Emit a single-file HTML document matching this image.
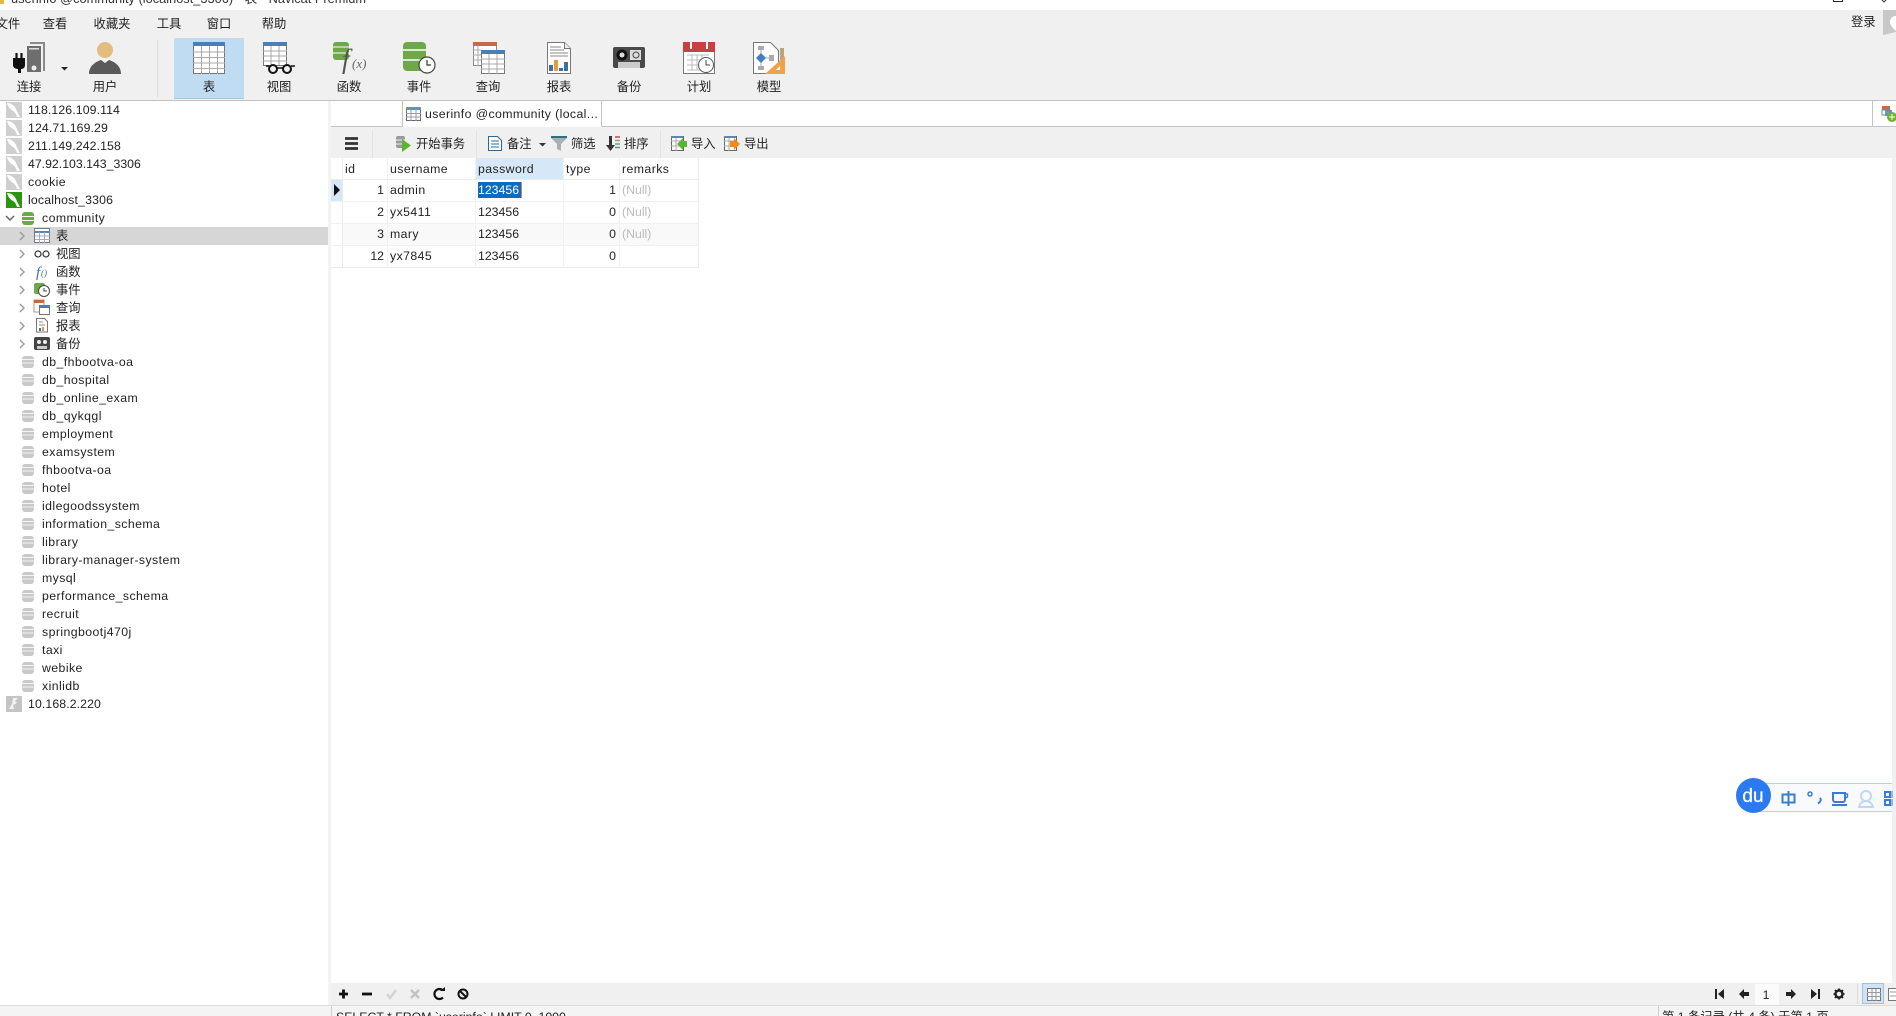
<!DOCTYPE html>
<html lang="zh"><head><meta charset="utf-8"><title>userinfo @community (localhost_3306) - 表 - Navicat Premium</title>
<style>
html,body{margin:0;padding:0;width:1896px;height:1016px;overflow:hidden;background:#fff}
body{position:relative;font-family:"Liberation Sans","Noto Sans CJK SC",sans-serif;font-size:12.3px;color:#222}
.a{position:absolute}
.t{position:absolute;white-space:nowrap;line-height:18px;height:18px}
.c{transform:translateX(-50%)}
.r{transform:translateX(-100%)}
.l{letter-spacing:.42px}
.n{letter-spacing:.1px}
svg{position:absolute;left:0;top:0}
</style></head><body>
<!-- backgrounds -->
<div class="a" style="left:0;top:10px;width:1896px;height:90px;background:#f0f0f0"></div>
<div class="a" style="left:174px;top:38px;width:70px;height:61px;background:#bfdcf3;border-bottom:1px solid #a5c8e4;box-sizing:border-box"></div>
<div class="a" style="left:157px;top:40px;width:1px;height:57px;background:#ddd"></div>
<div class="a" style="left:0;top:100px;width:1896px;height:1px;background:#c2c2c2"></div>
<div class="a" style="left:0;top:227px;width:328px;height:18px;background:#d6d6d6"></div>
<div class="a" style="left:328px;top:101px;width:3px;height:904px;background:#f3f3f3"></div>
<div class="a" style="left:331px;top:126px;width:1565px;height:1px;background:#c4c4c4"></div>
<div class="a" style="left:402px;top:101px;width:1px;height:26px;background:#c4c4c4"></div>
<div class="a" style="left:601px;top:101px;width:1px;height:26px;background:#c4c4c4"></div>
<div class="a" style="left:403px;top:126px;width:198px;height:1px;background:#fff"></div>
<div class="a" style="left:1872px;top:101px;width:1px;height:25px;background:#c4c4c4"></div>
<div class="a" style="left:331px;top:127px;width:1565px;height:31px;background:#f0f0f0"></div>
<div class="a" style="left:372px;top:131px;width:1px;height:26px;background:#e4e4e4"></div>
<div class="a" style="left:476px;top:131px;width:1px;height:26px;background:#e4e4e4"></div>
<div class="a" style="left:660px;top:131px;width:1px;height:26px;background:#e4e4e4"></div>
<div class="a" style="left:1892px;top:158px;width:4px;height:825px;background:#f0f0f0"></div>
<!-- grid -->
<div class="a" style="left:476px;top:158px;width:87px;height:21px;background:#d6e8f7"></div>
<div class="a" style="left:331px;top:179px;width:12px;height:22px;background:#d6e8f7"></div>
<div class="a" style="left:343px;top:223px;width:355px;height:22px;background:#f9f9f9"></div>
<div class="a" style="left:478px;top:182px;width:43px;height:16px;background:#0a6ac4"></div>
<div class="a" style="left:521px;top:182px;width:1px;height:16px;background:#d98a3c"></div>
<div class="a" style="left:342px;top:158px;width:1px;height:110px;background:#ececec"></div>
<div class="a" style="left:387px;top:158px;width:1px;height:110px;background:#f1f1f1"></div>
<div class="a" style="left:475px;top:158px;width:1px;height:110px;background:#f1f1f1"></div>
<div class="a" style="left:563px;top:158px;width:1px;height:110px;background:#f1f1f1"></div>
<div class="a" style="left:619px;top:158px;width:1px;height:110px;background:#f1f1f1"></div>
<div class="a" style="left:698px;top:158px;width:1px;height:110px;background:#ececec"></div>
<div class="a" style="left:331px;top:179px;width:368px;height:1px;background:#ececec"></div>
<div class="a" style="left:331px;top:201px;width:368px;height:1px;background:#f1f1f1"></div>
<div class="a" style="left:331px;top:223px;width:368px;height:1px;background:#f1f1f1"></div>
<div class="a" style="left:331px;top:245px;width:368px;height:1px;background:#f1f1f1"></div>
<div class="a" style="left:331px;top:267px;width:368px;height:1px;background:#ececec"></div>
<!-- bottom bars -->
<div class="a" style="left:331px;top:983px;width:1565px;height:22px;background:#f0f0f0"></div>
<div class="a" style="left:0;top:1005px;width:1896px;height:1px;background:#dcdcdc"></div>
<div class="a" style="left:0;top:1006px;width:1896px;height:10px;background:#f4f4f4"></div>
<div class="a" style="left:331px;top:1006px;width:1px;height:10px;background:#d0d0d0"></div>
<div class="a" style="left:1658px;top:1006px;width:1px;height:10px;background:#d0d0d0"></div>
<div class="a" style="left:1755px;top:984px;width:24px;height:21px;background:#fbfbfb"></div>
<div class="a" style="left:1857px;top:984px;width:1px;height:20px;background:#dcdcdc"></div>
<div class="a" style="left:1862px;top:983px;width:22px;height:21px;background:#cfe3f5;border:1px solid #9cc3e4;box-sizing:border-box"></div>
<!-- du widget -->
<div class="a" style="left:1753px;top:783px;width:139px;height:29px;background:#f8fafe;border:1px solid #b3d2f2;border-right:0;box-sizing:border-box"></div>

<svg width="1896" height="1016" viewBox="0 0 1896 1016">
<defs>
 <g id="srv"><rect width="16" height="16" fill="#cfcfcf"/><path d="M1 1c4 0 7 2 9 6 1 3 3 6 4 8h-3c-1-3-2-5-4-6-3-2-5-4-6-8z" fill="#fff"/></g>
 <g id="db"><rect x="0" y="1" width="12" height="12" rx="3" fill="#c9c9c9"/><path d="M0 4.500h12M0 8h12" stroke="#f4f4f4" stroke-width="1"/></g>
 <g id="gar"><path d="M0 0l4 4-4 4" fill="none" stroke="#999" stroke-width="1.400"/></g>
 <g id="grid32"><rect x=".5" y=".5" width="31" height="31" fill="#fff" stroke="#777"/><rect width="32" height="4" fill="#4a7fb5"/><path d="M0 10h32M0 15.500h32M0 21h32M0 26.500h32M8.500 4v28M16.500 4v28M24.500 4v28" stroke="#aaa" fill="none"/></g>
</defs>

<!-- toolbar: connect -->
<path d="M16.500 53v6M21.500 53v6" stroke="#111" stroke-width="2.200"/>
<path d="M13 58h12v7c0 3-2 4-4 4v4h-3v-4c-2 0-5-1-5-4z" fill="#111"/>
<path d="M30 42h15v29h-2V44H30z" fill="#8a8a8a"/>
<rect x="27" y="46" width="14" height="26" fill="#6e6e6e"/><rect x="29" y="48" width="10" height="1.500" fill="#ddd"/><circle cx="34" cy="68" r="2.500" fill="#eee"/>
<path d="M61 67h7l-3.500 3.500z" fill="#222"/>
<!-- user -->
<circle cx="105" cy="50" r="8" fill="#e3bd7d"/>
<path d="M89 74c0-8 6-12 12-14l4 3 4-3c6 2 12 6 12 14z" fill="#5a5a5a"/><path d="M101 59h8l-4 4z" fill="#f4f4f4"/>
<!-- table -->
<use href="#grid32" x="193" y="42"/>
<!-- view -->
<rect x="263.500" y="42.500" width="23" height="23" fill="#fff" stroke="#777"/><rect x="263" y="42" width="24" height="4" fill="#4a7fb5"/>
<path d="M263 51h24M263 56h24M263 61h24M271 46v19M279 46v19" stroke="#aaa"/>
<circle cx="273" cy="69" r="4" fill="#f0f0f0" stroke="#111" stroke-width="2"/><circle cx="287" cy="69" r="4" fill="#f0f0f0" stroke="#111" stroke-width="2"/><path d="M266 66h3M277 68h6M291 66h4" stroke="#111" stroke-width="1.500"/>
<!-- func -->
<rect x="333" y="42" width="16" height="18" rx="3" fill="#6fa84a"/><path d="M333 47h16M333 53h16" stroke="#fff"/>
<text x="342" y="68" font-family="Liberation Serif,serif" font-style="italic" font-size="27" fill="#555">f</text><text x="352" y="68" font-family="Liberation Serif,serif" font-style="italic" font-size="13" fill="#666">(x)</text>
<!-- event -->
<rect x="403" y="42" width="23" height="29" rx="4" fill="#6fa84a"/><path d="M403 50h23M403 60h23" stroke="#fff" stroke-width="1.500"/>
<circle cx="427" cy="65" r="8" fill="#fff" stroke="#444" stroke-width="1.200"/><path d="M427 60v5h4" fill="none" stroke="#333" stroke-width="1.200"/>
<!-- query -->
<rect x="473.500" y="42.500" width="23" height="23" fill="#fff" stroke="#888"/><rect x="473" y="42" width="24" height="4" fill="#c8694a"/><path d="M473 50h8M473 55h8M473 60h8M478 46v20" stroke="#aaa"/>
<rect x="481.500" y="50.500" width="23" height="23" fill="#fff" stroke="#777"/><rect x="481" y="50" width="24" height="4" fill="#4a7fb5"/><path d="M481 59h24M481 64h24M481 69h24M489 54v20M497 54v20" stroke="#aaa"/>
<!-- report -->
<path d="M547.500 42.500h17l6 6v25h-23z" fill="#fff" stroke="#777"/><path d="M564.500 42.500v6h6" fill="#eee" stroke="#777"/>
<path d="M550 47h11M550 50h14M550 53h18M550 56h18" stroke="#888"/>
<rect x="549" y="65" width="4" height="6" fill="#3f6fa5"/><rect x="554" y="60" width="4" height="11" fill="#e79a3c"/><rect x="559" y="68" width="4" height="3" fill="#3f6fa5"/><rect x="564" y="62" width="4" height="9" fill="#3f6fa5"/>
<!-- backup -->
<path d="M615 47h28a2 2 0 0 1 2 2v17a2 2 0 0 1-2 2h-28a2 2 0 0 1-2-2V49a2 2 0 0 1 2-2z" fill="#4a4a4a"/><rect x="618" y="62" width="22" height="6" fill="#ccc"/>
<circle cx="622" cy="55" r="5.500" fill="#111"/><circle cx="622" cy="55" r="2.500" fill="#ddd"/><rect x="630" y="50" width="11" height="10" fill="#ddd"/><circle cx="636" cy="55" r="3" fill="none" stroke="#444"/>
<!-- schedule -->
<rect x="683.500" y="42.500" width="31" height="31" fill="#fff" stroke="#777"/><rect x="683" y="42" width="32" height="10" fill="#c8403f"/><path d="M691 42v7M707 42v7" stroke="#fff" stroke-width="2"/>
<path d="M687 55h22M687 60h22M687 65h22M687 70h22M692 55v15M697 55v15M702 55v15" stroke="#bbb"/>
<circle cx="706" cy="65" r="7.500" fill="#fff" stroke="#555"/><path d="M706 60v5h4" fill="none" stroke="#444"/>
<!-- model -->
<path d="M753.500 42.500h17l8 8v23h-25z" fill="#fff" stroke="#777"/>
<rect x="758" y="46" width="6" height="4" fill="#aaa"/><rect x="758" y="66" width="6" height="4" fill="#aaa"/><rect x="769" y="55" width="5" height="6" fill="#aaa"/>
<path d="M761 50v16M764 58h6" stroke="#aaa"/><path d="M761 53l5 5-5 5-5-5z" fill="#3f7fc0"/>
<path d="M780 48h4v26h-4z" fill="#b9a47c"/><path d="M785 56v18h-20z" fill="#f0a24b"/><path d="M780 66v4h-4z" fill="#fff"/>
<!-- login avatar -->
<path d="M1883 10h13v22l-13 3z" fill="#c8c8c8"/><path d="M1896 16c-4 0-6 3-6 6s2 5 6 9z" fill="#fff"/>
<!-- title controls -->
<rect x="1833.500" y="-4.500" width="9" height="6" fill="none" stroke="#222"/>
<path d="M1878-3l6 6 6-6" fill="none" stroke="#333" stroke-width="1" transform="translate(0 -1)"/>
<path d="M0-2h4v6l-4 0z" fill="#e9b93c"/>
<!-- tab icon -->
<rect x="406.500" y="107.500" width="14" height="13" fill="#fff" stroke="#667"/><rect x="406" y="107" width="15" height="3" fill="#6a8fb5"/><path d="M406 113.500h15M406 117h15M411 110v11M416 110v11" stroke="#99a"/>
<rect x="1882" y="106" width="8" height="4" fill="#c8694a"/><rect x="1882" y="110" width="8" height="5" fill="#fff" stroke="#888"/><rect x="1885" y="110" width="7" height="6" fill="#4a7fb5" opacity=".8"/>
<circle cx="1892" cy="117" r="5" fill="#6cb52d"/><path d="M1889 117h6M1892 114v6" stroke="#fff"/>

<!-- tree: servers -->
<use href="#srv" x="6" y="102"/><use href="#srv" x="6" y="120"/><use href="#srv" x="6" y="138"/><use href="#srv" x="6" y="156"/><use href="#srv" x="6" y="174"/>
<rect x="6" y="192" width="16" height="16" fill="#2a950f"/><path d="M7 193c4 0 7 2 9 6 1 3 3 6 4 8h-3c-1-3-2-5-4-6-3-2-5-4-6-8z" fill="#fff"/>
<path d="M6 216l4 4 4-4" fill="none" stroke="#666" stroke-width="1.500"/>
<rect x="22" y="212" width="12" height="13" rx="3" fill="#69ab45"/><path d="M22 216.500h12M22 220.500h12" stroke="#fff"/>
<use href="#gar" x="20" y="232"/><use href="#gar" x="20" y="250"/><use href="#gar" x="20" y="268"/><use href="#gar" x="20" y="286"/><use href="#gar" x="20" y="304"/><use href="#gar" x="20" y="322"/><use href="#gar" x="20" y="340"/>
<!-- tree child icons -->
<rect x="34.500" y="228.500" width="15" height="14" fill="#fff" stroke="#778"/><path d="M35 232h15" stroke="#5a86b5" stroke-width="2"/><path d="M35 236h15M35 239.500h15M39.500 232v11M44.500 232v11" stroke="#aab"/>
<circle cx="38" cy="254" r="3" fill="none" stroke="#333" stroke-width="1.200"/><circle cx="46" cy="254" r="3" fill="none" stroke="#333" stroke-width="1.200"/>
<text x="36" y="277" font-family="Liberation Serif,serif" font-style="italic" font-size="15" fill="#3f6f9f">f</text><text x="41" y="276" font-family="Liberation Serif,serif" font-style="italic" font-size="9" fill="#3f6f9f">()</text>
<rect x="34" y="283" width="11" height="11" rx="2" fill="#6fa84a"/><circle cx="44" cy="291" r="5.500" fill="#fff" stroke="#444"/><path d="M44 288v3h3" fill="none" stroke="#444"/>
<rect x="34" y="300" width="10" height="12" fill="#fff" stroke="#999"/><rect x="34" y="300" width="10" height="3" fill="#c8694a"/><rect x="39.500" y="305.500" width="10" height="9" fill="#fff" stroke="#777"/><rect x="39" y="305" width="11" height="3" fill="#4a7fb5"/>
<path d="M36.500 318.500h8l3 3v10.500h-11z" fill="#fff" stroke="#777"/><path d="M39 322h4M39 325h6" stroke="#888"/><rect x="39" y="328" width="2" height="3" fill="#3f6fa5"/><rect x="42" y="327" width="2" height="4" fill="#e79a3c"/>
<rect x="34" y="337" width="16" height="13" rx="2" fill="#444"/><circle cx="39" cy="342" r="2" fill="#eee"/><circle cx="45" cy="342" r="2" fill="#eee"/><rect x="37" y="346" width="10" height="3" fill="#ccc"/>
<!-- tree: db list -->
<use href="#db" x="22" y="355"/><use href="#db" x="22" y="373"/><use href="#db" x="22" y="391"/><use href="#db" x="22" y="409"/><use href="#db" x="22" y="427"/><use href="#db" x="22" y="445"/><use href="#db" x="22" y="463"/><use href="#db" x="22" y="481"/><use href="#db" x="22" y="499"/><use href="#db" x="22" y="517"/><use href="#db" x="22" y="535"/><use href="#db" x="22" y="553"/><use href="#db" x="22" y="571"/><use href="#db" x="22" y="589"/><use href="#db" x="22" y="607"/><use href="#db" x="22" y="625"/><use href="#db" x="22" y="643"/><use href="#db" x="22" y="661"/><use href="#db" x="22" y="679"/>
<rect x="6" y="696" width="16" height="16" fill="#c4c4c4"/><path d="M9 709l3-5 1-6 5-0-3 3 2 2-4 2 1 4z" fill="#f2f2f2"/>

<!-- toolbar2 -->
<path d="M345 138.500h13M345 143.500h13M345 148.500h13" stroke="#333" stroke-width="2.800"/>
<rect x="396" y="136" width="9" height="12" rx="2" fill="#9a9a9a"/><path d="M396 140h9M396 144h9" stroke="#eee"/><path d="M402 139l9 6.500-9 6.500z" fill="#5cb531"/>
<path d="M488.500 136.500h9l4 4v10h-13z" fill="#fff" stroke="#2c6a96"/><path d="M491 141h8M491 144h8M491 147h8" stroke="#2c6a96"/>
<path d="M539 143h7l-3.500 3.500z" fill="#333"/>
<path d="M551 136h16v2h-16z" fill="#2f6f7f"/><path d="M551 138h16l-6 6v7l-4-2v-5z" fill="#a8b0b4"/>
<path d="M609 136h3v9h3l-4.500 6-4.500-6h3z" fill="#333"/><path d="M615 137h5" stroke="#c44" stroke-width="1.500"/><path d="M615 140.500h5" stroke="#999" stroke-width="1.500"/><path d="M615 144h5" stroke="#6a6" stroke-width="1.500"/><path d="M615 147.500h5" stroke="#68a" stroke-width="1.500"/>
<rect x="671.500" y="136.500" width="12" height="14" fill="#fff" stroke="#666"/><path d="M671 141h12M671 146h12M676 137v14" stroke="#aaa"/><path d="M671 136h12v2h-12z" fill="#5a86b5"/><path d="M687 141h-4v-3l-6 6 6 6v-3h4z" fill="#5cb531"/>
<rect x="724.500" y="136.500" width="12" height="14" fill="#fff" stroke="#666"/><path d="M724 141h12M724 146h12M729 137v14" stroke="#aaa"/><path d="M724 136h12v2h-12z" fill="#5a86b5"/><path d="M730 141h4v-3l6 6-6 6v-3h-4z" fill="#ef8a20"/>
<!-- row marker -->
<path d="M334 184l6 6-6 6z" fill="#111"/>

<!-- bottom-left icons -->
<path d="M339 994h9M343.500 989.500v9" stroke="#111" stroke-width="2.800"/>
<path d="M362 994h10" stroke="#111" stroke-width="2.800"/>
<path d="M387 994l3 4 6-8" fill="none" stroke="#d2d2d2" stroke-width="2.400"/>
<path d="M411 990l8 8M419 990l-8 8" stroke="#c2c2c2" stroke-width="2.600"/>
<path d="M443 990.500a5 5 0 1 0 0 7" fill="none" stroke="#111" stroke-width="2.200"/><path d="M440 991h5v-4z" fill="#111"/>
<circle cx="463" cy="994" r="4.500" fill="none" stroke="#111" stroke-width="2"/><path d="M460 991l6 6" stroke="#111" stroke-width="2"/>
<!-- bottom-right nav -->
<path d="M1715 989h2v10h-2zM1724 989v10l-6-5z" fill="#222"/>
<path d="M1739 994l5-5v3h5v4h-5v3z" fill="#222"/>
<path d="M1796 994l-5-5v3h-5v4h5v3z" fill="#222"/>
<path d="M1811 989v10l6-5zM1818 989h2v10h-2z" fill="#222"/>
<circle cx="1839" cy="994" r="3.500" fill="none" stroke="#222" stroke-width="2.500"/><path d="M1839 988.500v2M1839 997.500v2M1833.500 994h2M1842.500 994h2M1835 990l1.500 1.500M1841.500 996.500l1.500 1.500M1835 998l1.500-1.500M1841.500 991.500l1.500-1.500" stroke="#222" stroke-width="1.800"/>
<rect x="1867.500" y="988.500" width="13" height="12" fill="#f4f8fc" stroke="#777"/><path d="M1867 992.500h14M1867 996.500h14M1872 989v12M1876 989v12" stroke="#999"/>
<rect x="1888.500" y="988.500" width="10" height="12" fill="#fff" stroke="#777"/><path d="M1890 992h6M1890 996h6" stroke="#999"/>
<!-- du -->
<circle cx="1753.500" cy="795.500" r="17.500" fill="#2a7bef"/>
<text x="1753" y="802" text-anchor="middle" font-family="Liberation Sans,sans-serif" font-size="19" fill="#fff" stroke="#fff" stroke-width=".3">du</text>
<rect x="1782.500" y="794.500" width="12" height="8" fill="none" stroke="#3a7bd5" stroke-width="2"/><path d="M1788.500 791v15" stroke="#3a7bd5" stroke-width="2"/>
<circle cx="1810" cy="794" r="2" fill="none" stroke="#3a7bd5" stroke-width="1.500"/><path d="M1820 798c1.500 2 .5 4-2 5.500" fill="none" stroke="#3a7bd5" stroke-width="2"/>
<path d="M1833 793h12v6c0 2-1 3-2 3h-8c-1 0-2-1-2-3z" fill="none" stroke="#3a7bd5" stroke-width="2"/><path d="M1845 794h2.500v3l-2.500 1" fill="none" stroke="#3a7bd5" stroke-width="1.300"/><path d="M1832 805h15" stroke="#3a7bd5" stroke-width="2"/>
<circle cx="1866" cy="796" r="5" fill="none" stroke="#c3d6f0" stroke-width="2"/><path d="M1859 807c1-4 4-6 7-6s6 2 7 6z" fill="none" stroke="#c3d6f0" stroke-width="2"/>
<path d="M1885 792h5v5h-5zM1885 800h5v5h-5z" fill="none" stroke="#3a7bd5" stroke-width="2"/><path d="M1892 791v7M1892 799v7" stroke="#3a7bd5" stroke-width="1"/>
</svg>

<!-- title -->
<div class="t" style="left:11px;top:-10px;font-size:12.800px;color:#333">userinfo @community (localhost_3306) - 表 - Navicat Premium</div>
<!-- menu -->
<div class="t c" style="left:8px;top:15px">文件</div><div class="t c" style="left:55px;top:15px">查看</div><div class="t c" style="left:112px;top:15px">收藏夹</div><div class="t c" style="left:169px;top:15px">工具</div><div class="t c" style="left:219px;top:15px">窗口</div><div class="t c" style="left:274px;top:15px">帮助</div>
<div class="t" style="left:1851px;top:13px">登录</div>
<!-- toolbar labels -->
<div class="t c" style="left:29px;top:78px">连接</div><div class="t c" style="left:105px;top:78px">用户</div><div class="t c" style="left:209px;top:78px">表</div><div class="t c" style="left:279px;top:78px">视图</div><div class="t c" style="left:349px;top:78px">函数</div><div class="t c" style="left:419px;top:78px">事件</div><div class="t c" style="left:488px;top:78px">查询</div><div class="t c" style="left:559px;top:78px">报表</div><div class="t c" style="left:629px;top:78px">备份</div><div class="t c" style="left:699px;top:78px">计划</div><div class="t c" style="left:769px;top:78px">模型</div>
<!-- tree text -->
<div class="t n" style="left:28px;top:101px">118.126.109.114</div>
<div class="t n" style="left:28px;top:119px">124.71.169.29</div>
<div class="t n" style="left:28px;top:137px">211.149.242.158</div>
<div class="t" style="left:28px;top:155px">47.92.103.143_3306</div>
<div class="t l" style="left:28px;top:173px">cookie</div>
<div class="t" style="left:28px;top:191px;letter-spacing:.17px">localhost_3306</div>
<div class="t l" style="left:42px;top:209px">community</div>
<div class="t" style="left:56px;top:227px">表</div>
<div class="t" style="left:56px;top:245px">视图</div>
<div class="t" style="left:56px;top:263px">函数</div>
<div class="t" style="left:56px;top:281px">事件</div>
<div class="t" style="left:56px;top:299px">查询</div>
<div class="t" style="left:56px;top:317px">报表</div>
<div class="t" style="left:56px;top:335px">备份</div>
<div class="t l" style="left:42px;top:353px">db_fhbootva-oa</div>
<div class="t l" style="left:42px;top:371px">db_hospital</div>
<div class="t l" style="left:42px;top:389px">db_online_exam</div>
<div class="t l" style="left:42px;top:407px">db_qykqgl</div>
<div class="t l" style="left:42px;top:425px">employment</div>
<div class="t l" style="left:42px;top:443px">examsystem</div>
<div class="t l" style="left:42px;top:461px">fhbootva-oa</div>
<div class="t l" style="left:42px;top:479px">hotel</div>
<div class="t l" style="left:42px;top:497px">idlegoodssystem</div>
<div class="t l" style="left:42px;top:515px">information_schema</div>
<div class="t l" style="left:42px;top:533px">library</div>
<div class="t l" style="left:42px;top:551px">library-manager-system</div>
<div class="t l" style="left:42px;top:569px">mysql</div>
<div class="t l" style="left:42px;top:587px">performance_schema</div>
<div class="t l" style="left:42px;top:605px">recruit</div>
<div class="t l" style="left:42px;top:623px">springbootj470j</div>
<div class="t l" style="left:42px;top:641px">taxi</div>
<div class="t l" style="left:42px;top:659px">webike</div>
<div class="t l" style="left:42px;top:677px">xinlidb</div>
<div class="t n" style="left:28px;top:695px">10.168.2.220</div>
<!-- tab -->
<div class="t" style="left:425px;top:105px;letter-spacing:.38px">userinfo @community (local...</div>
<!-- toolbar2 text -->
<div class="t" style="left:416px;top:135px">开始事务</div><div class="t" style="left:507px;top:135px">备注</div><div class="t" style="left:571px;top:135px">筛选</div><div class="t" style="left:624px;top:135px">排序</div><div class="t" style="left:691px;top:135px">导入</div><div class="t" style="left:744px;top:135px">导出</div>
<!-- grid text -->
<div class="t l" style="left:345px;top:160px">id</div><div class="t l" style="left:390px;top:160px">username</div><div class="t l" style="left:478px;top:160px">password</div><div class="t l" style="left:566px;top:160px">type</div><div class="t l" style="left:622px;top:160px">remarks</div>
<div class="t r" style="left:384px;top:181px">1</div><div class="t l" style="left:390px;top:181px">admin</div><div class="t" style="left:478px;top:181px;color:#fff">123456</div><div class="t r" style="left:616px;top:181px">1</div><div class="t" style="left:622px;top:181px;color:#bbb">(Null)</div>
<div class="t r" style="left:384px;top:203px">2</div><div class="t l" style="left:390px;top:203px">yx5411</div><div class="t" style="left:478px;top:203px">123456</div><div class="t r" style="left:616px;top:203px">0</div><div class="t" style="left:622px;top:203px;color:#bbb">(Null)</div>
<div class="t r" style="left:384px;top:225px">3</div><div class="t l" style="left:390px;top:225px">mary</div><div class="t" style="left:478px;top:225px">123456</div><div class="t r" style="left:616px;top:225px">0</div><div class="t" style="left:622px;top:225px;color:#bbb">(Null)</div>
<div class="t r" style="left:384px;top:247px">12</div><div class="t l" style="left:390px;top:247px">yx7845</div><div class="t" style="left:478px;top:247px">123456</div><div class="t r" style="left:616px;top:247px">0</div>
<!-- bottom -->
<div class="t c" style="left:1766px;top:986px">1</div>
<div class="t" style="left:336px;top:1008px">SELECT * FROM `userinfo` LIMIT 0, 1000</div>
<div class="t" style="left:1662px;top:1008px">第 1 条记录 (共 4 条) 于第 1 页</div>
</body></html>
